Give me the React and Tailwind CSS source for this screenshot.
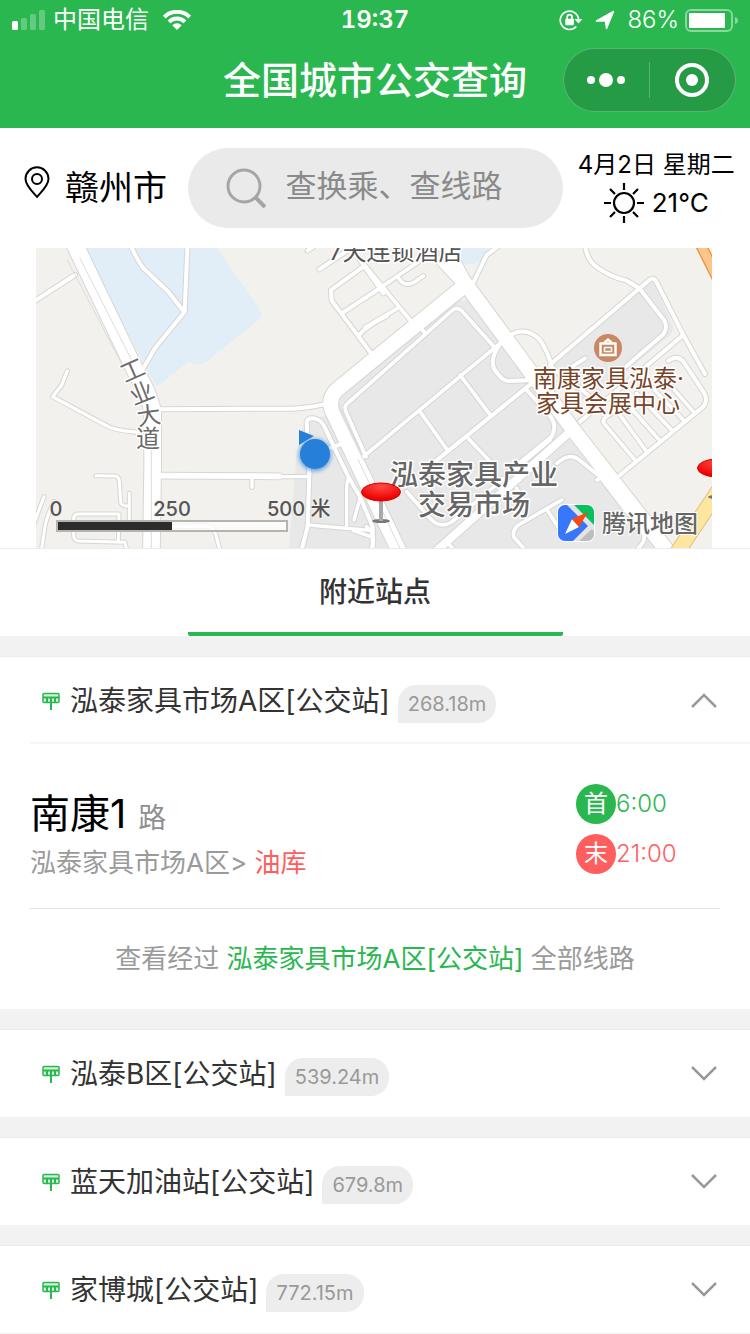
import React, { useState } from "react";

// Road geometry is kept in 3x units, split into a west and an east tile.
const westRoads = [
  { d: "M128 0 L320 400 Q362 470 368 520 L368 680 L364 950", w: 50 },
  { d: "M0 192 L135 105", w: 12 },
  { d: "M300 10 Q315 50 340 85 L415 155 L462 215", w: 12 },
  { d: "M473 0 L464 215 L375 325 L340 385", w: 12 },
  { d: "M112 393 L95 435 L68 470 L235 560 Q260 572 330 577", w: 10 },
  { d: "M390 508 L790 506 Q840 503 895 490", w: 12 },
  { d: "M385 707 L748 709", w: 17 },
  { d: "M740 710 L838 710", w: 10 },
  { d: "M666 715 L666 742", w: 10 },
  { d: "M198 707 L255 708 Q268 710 268 725 L272 785 Q272 798 296 798", w: 9 },
  { d: "M298 760 L298 855 L340 858", w: 9 },
  { d: "M267 822 L145 822 Q132 822 131 835 L131 885 Q131 902 145 903 L285 907 L292 940 M267 822 L265 905", w: 9 },
  { d: "M42 770 L12 850 M72 784 Q50 830 45 860 L33 940", w: 9 },
  { d: "M388 860 L530 858 Q550 860 558 885 L572 940", w: 10 },
  { d: "M838 700 L830 545 Q835 530 860 537 Q880 545 890 575 L955 710 L990 770 L1028 860 L1028 940", w: 12 },
  { d: "M838 700 L833 860 L812 940", w: 12 },
  { d: "M957 712 Q948 730 950 760 L950 865 M835 855 L1030 872 M970 872 L1030 892 M990 775 L972 840", w: 10 },
  { d: "M900 625 L945 607", w: 12 },
  { d: "M1000 80 L903 150 L905 182 L1035 355 M990 60 L1060 160 M935 220 L1060 138 M990 282 Q1010 258 1070 228 M868 88 L970 20 M833 32 L850 20", w: 12 },
];

const eastRoads = [
  { d: "M195 50 L280 142", w: 20 },
  { d: "M225 20 L278 120 L610 570 L905 950", w: 44 },
  { d: "M280 140 L0 368 L-100 450 Q-130 480 -110 520 L95 950", w: 44 },
  { d: "M600 575 L180 950", w: 24 },
  { d: "M-12 650 L-72 515 Q-80 500 -65 488 L248 210 Q262 200 275 212 L370 318 M150 262 L168 282 M-30 658 L390 310", w: 11 },
  { d: "M270 405 L362 527 M150 515 L232 630 M290 590 L370 675", w: 11 },
  { d: "M388 315 Q350 370 385 403 Q400 424 420 423 L490 420 M485 430 L170 685", w: 12 },
  { d: "M420 285 Q470 258 510 300 Q528 325 545 375", w: 12 },
  { d: "M470 450 L542 530 Q562 555 545 590 L410 700", w: 12 },
  { d: "M110 755 L185 840 Q212 866 245 846 L540 600", w: 11 },
  { d: "M560 670 Q600 635 628 660 L690 710 L820 880 Q830 900 805 925 M720 700 L680 720", w: 11 },
  { d: "M575 780 L445 855 Q425 872 432 892 L475 940 M530 808 L570 870 M440 745 L458 775 M235 910 L260 940", w: 11 },
  { d: "M545 370 L835 122 Q850 108 860 127 L940 285 L1005 402", w: 12 },
  { d: "M808 145 L882 240 Q895 262 880 283 L770 378", w: 12 },
  { d: "M645 10 Q648 60 682 82 Q720 110 770 122 L808 145", w: 12 },
  { d: "M750 705 L1000 500 Q1015 480 1002 458 L938 362 Q920 345 895 362", w: 12 },
  { d: "M630 545 L940 285", w: 12 },
  { d: "M795 660 L702 550 Q695 538 712 528 L765 495 M740 512 L830 635 M770 490 L868 600 M800 460 L905 570 M830 425 L940 540 M865 395 L970 515", w: 11 },
  { d: "M540 375 L590 425 M590 390 L645 355 M600 420 L660 470", w: 11 },
  { d: "M308 132 L350 45 L390 15", w: 12 },
  { d: "M-20 70 L120 240 M-20 178 L190 35 M82 108 Q100 143 130 128 L160 108 M82 205 L-15 262", w: 11 },
  { d: "M-10 860 Q20 880 5 925", w: 11 },
];

const stations = [
  {
    name: "泓泰家具市场A区[公交站]",
    distance: "268.18m",
    lines: [{ name: "南康1", from: "泓泰家具市场A区", to: "油库", first: "6:00", last: "21:00" }],
  },
  { name: "泓泰B区[公交站]", distance: "539.24m", lines: [] },
  { name: "蓝天加油站[公交站]", distance: "679.8m", lines: [] },
  { name: "家博城[公交站]", distance: "772.15m", lines: [] },
];

function Roads({ roads, casing }) {
  return roads.map((road, i) => (
    <path
      key={i}
      d={road.d}
      stroke={casing ? "#d6d6d3" : "#ffffff"}
      strokeWidth={casing ? road.w + 6 : road.w}
    />
  ));
}

function Pushpin({ x, y }) {
  return (
    <g transform={`translate(${x} ${y})`}>
      <ellipse cx="0" cy="29" rx="9" ry="2" fill="#777" />
      <rect x="-2" y="6" width="4" height="23" fill="#a9a9a9" />
      <ellipse cx="0" cy="0" rx="19.500" ry="9" fill="url(#pinRed)" stroke="#d80000" />
    </g>
  );
}

function NearbyMap() {
  const west = "translate(-6 -8) scale(0.33333)";
  const east = "translate(334 -8) scale(0.33333)";
  return (
    <svg viewBox="0 0 676 300" className="block w-full bg-[#f2f1ed]" role="img" aria-label="地图">
      <defs>
        <radialGradient id="pinRed" cx="0.5" cy="0.2" r="0.7">
          <stop offset="0" stopColor="#ff4a45" />
          <stop offset="1" stopColor="#ee0000" />
        </radialGradient>
        <filter id="glow" x="-50%" y="-50%" width="200%" height="200%">
          <feGaussianBlur stdDeviation="2" />
        </filter>
      </defs>

      <g transform={west}>
        <path d="M145 0 L545 0 L690 210 Q698 225 688 238 L528 366 Q512 378 495 374 L475 366 L380 440 Z" fill="#e1eef8" />
        <path d="M775 950 L800 640 L820 555 L900 520 L1130 950 Z" fill="#e8e8e8" />
      </g>
      <g transform={east}>
        <ellipse cx="300" cy="24" rx="55" ry="48" fill="#e1eef8" />
        <path d="M-100 480 L255 185 L290 180 L420 320 L610 570 L900 950 L100 950 Z" fill="#e8e8e8" />
        <path d="M545 370 L810 145 L850 120 L910 262 Q910 275 895 290 L700 450 L640 480 Z" fill="#e8e8e8" />
      </g>

      <g fill="none" strokeLinecap="round" strokeLinejoin="round">
        <g transform={west}><Roads roads={westRoads} casing /></g>
        <g transform={east}><Roads roads={eastRoads} casing /></g>
        <g transform={west}><Roads roads={westRoads} /></g>
        <g transform={east}><Roads roads={eastRoads} /></g>
        <g transform={west} stroke="#dcdcda" strokeWidth="3">
          <path d="M112 60 L285 390 M150 55 L310 370 M364 630 L364 950" />
          <path d="M925 495 L930 515 L1000 660 M985 660 L1110 925" />
        </g>
        <g transform={east}>
          <path d="M985 0 L1060 150" stroke="#e9953c" strokeWidth="34" />
          <path d="M985 0 L1060 150" stroke="#fcc68b" strokeWidth="26" />
          <path d="M1060 730 L910 955" stroke="#e5bf79" strokeWidth="48" />
          <path d="M1060 730 L910 955" stroke="#ffe6a0" strokeWidth="42" />
        </g>
      </g>

      {/* exhibition centre */}
      <circle cx="572" cy="100" r="14" fill="#cb8664" />
      <g fill="none" stroke="#ffffff" strokeWidth="2.400">
        <path d="M564.500 95.500 H579.500 V107 H564.500 Z" />
        <path d="M568.500 99.500 H575.500 V103.500 H568.500 Z" strokeWidth="1.500" />
        <path d="M568 95 L572 91.500 L576 95" />
      </g>

      {/* current position */}
      <circle cx="279" cy="207" r="16" fill="#2680d9" opacity="0.7" filter="url(#glow)" />
      <path d="M263 182 L278 188 L263 197 Z" fill="#2680d9" />
      <circle cx="279" cy="206" r="15" fill="#2680d9" />

      <g stroke="#ffffff" strokeWidth="3" strokeLinejoin="round" className="[paint-order:stroke]">
        <g fill="#555555" fontSize="24">
          <text x="293" y="12">7天连锁酒店</text>
        </g>
        <g fill="#6b6b6b" fontSize="24" textAnchor="middle">
          <text transform="translate(100 130) rotate(-24)">工</text>
          <text transform="translate(109 153) rotate(-22)">业</text>
          <text transform="translate(114 176) rotate(-8)">大</text>
          <text transform="translate(112 199)">道</text>
        </g>
        <g fill="#774428" fontSize="24">
          <text x="497" y="139">南康家具泓泰·</text>
          <text x="500" y="164">家具会展中心</text>
        </g>
        <g fill="#666666" fontSize="28" fontWeight="500" textAnchor="middle">
          <text x="438" y="237">泓泰家具产业</text>
          <text x="438" y="267">交易市场</text>
        </g>
      </g>

      <Pushpin x={345} y={244} />
      <Pushpin x={681} y={220} />

      {/* scale bar */}
      <rect x="21" y="273" width="230" height="10" fill="#ffffff" fillOpacity="0.7" stroke="#b5b4b1" strokeWidth="2" />
      <rect x="22" y="274" width="114" height="8" fill="#2c2c2c" />
      <g fill="#555555" fontSize="20" fontWeight="500" stroke="#f2f1ed" strokeWidth="2" className="[paint-order:stroke]">
        <text x="20" y="268" textAnchor="middle">0</text>
        <text x="136" y="268" textAnchor="middle">250</text>
        <text x="231" y="268">500 米</text>
      </g>

      {/* map provider */}
      <clipPath id="logoClip"><rect x="522" y="257" width="36" height="36" rx="7" /></clipPath>
      <rect x="521" y="256" width="38" height="38" rx="8" fill="#ffffff" />
      <g clipPath="url(#logoClip)">
        <rect x="522" y="257" width="36" height="36" fill="#e4e4e4" />
        <path d="M522 257 H531 L552 278 L537 293 H522 Z" fill="#3777fb" />
        <path d="M538 257 H558 V277 Z" fill="#07c160" />
        <path d="M543 293 L556 281 L558 283 V293 Z" fill="#bdbdbd" />
        <path d="M529 286 L536 271 L543 279 Z" fill="#ffffff" />
        <path d="M536 271 L552 264 L543 279 Z" fill="#fc4b12" />
      </g>
      <text x="566" y="284" fontSize="24" fontWeight="500" fill="#666666" stroke="#ffffff" strokeWidth="2" className="[paint-order:stroke]">
        腾讯地图
      </text>
    </svg>
  );
}

function StatusBar() {
  return (
    <div className="grid h-10 grid-cols-[1fr_auto_1fr] items-center text-2xl">
      <div className="flex items-center gap-2 pl-3">
        <svg viewBox="0 0 33 20" className="h-5 w-[33px]" fill="#ffffff">
          <rect x="0" y="11" width="6" height="9" rx="1.500" />
          <g opacity="0.27">
            <rect x="9" y="8" width="6" height="12" rx="1.500" />
            <rect x="18" y="4" width="6" height="16" rx="1.500" />
            <rect x="27" y="0" width="6" height="20" rx="1.500" />
          </g>
        </svg>
        <span>中国电信</span>
        <svg viewBox="0 0 28 20" className="ml-1.5 h-5 w-7" fill="none" stroke="#ffffff" strokeWidth="4">
          <path d="M1.300 7 A18 18 0 0 1 26.700 7" />
          <path d="M6 11.900 A11.300 11.300 0 0 1 22 11.900" />
          <path d="M14 20 L9.300 15.300 A6.600 6.600 0 0 1 18.700 15.300 Z" fill="#ffffff" stroke="none" />
        </svg>
      </div>
      <span className="font-semibold tabular-nums">19:37</span>
      <div className="flex items-center justify-end pr-3">
        <svg viewBox="0 0 24 22" className="h-[22px] w-6" fill="none" stroke="#ffffff" strokeWidth="1.700">
          <path d="M17.300 17.500 A9.200 9.200 0 1 1 19.600 10" />
          <path d="M15.500 10 H23.500 L19.500 14.500 Z" fill="#ffffff" stroke="none" />
          <rect x="6.300" y="9.800" width="8.600" height="6.400" rx="0.800" fill="#ffffff" stroke="none" />
          <path d="M8.200 10 V8 A2.400 2.400 0 0 1 13 8 V10" />
        </svg>
        <svg viewBox="0 0 20 20" className="ml-3 h-5 w-5" fill="#ffffff">
          <path d="M1.500 11 L18.500 1.500 L11.500 18.500 L10.500 11 Z" stroke="#ffffff" strokeWidth="1.500" strokeLinejoin="round" />
        </svg>
        <span className="ml-3 font-light">86%</span>
        <svg viewBox="0 0 53 23" className="ml-1.5 h-[23px] w-[53px]">
          <rect x="1" y="1" width="46" height="21" rx="5" fill="none" stroke="#ffffff" strokeOpacity="0.45" strokeWidth="2" />
          <rect x="4" y="4" width="36" height="15" rx="1" fill="#ffffff" />
          <path d="M50 8 Q53 9 53 11.500 Q53 14 50 15 Z" fill="#ffffff" fillOpacity="0.45" />
        </svg>
      </div>
    </div>
  );
}

function Header() {
  return (
    <header className="bg-[#2bb750] pb-2 text-white">
      <StatusBar />
      <div className="grid h-20 grid-cols-[1fr_auto_1fr] items-center">
        <h1 className="col-start-2 text-[38px] leading-none font-medium">全国城市公交查询</h1>
        <div className="mr-3.5 grid h-16 w-[173px] grid-cols-2 items-center justify-self-end rounded-full border border-white/25 bg-[#259b46]">
          <button className="flex h-9 items-center justify-center gap-1 border-r border-white/25" aria-label="更多">
            <span className="size-2 rounded-full bg-white" />
            <span className="size-3.5 rounded-full bg-white" />
            <span className="size-2 rounded-full bg-white" />
          </button>
          <button className="flex items-center justify-center" aria-label="关闭">
            <svg viewBox="0 0 34 34" className="size-[34px]">
              <circle cx="17" cy="17" r="15" fill="none" stroke="#ffffff" strokeWidth="4" />
              <circle cx="17" cy="17" r="6" fill="#ffffff" />
            </svg>
          </button>
        </div>
      </div>
    </header>
  );
}

function SearchBar() {
  return (
    <div className="flex h-[120px] items-center">
      <button className="flex w-1/4 items-center gap-[15px] pl-6 text-[34px] leading-none">
        <svg viewBox="0 0 26 32" className="mb-3 h-8 w-[26px] shrink-0" fill="none" stroke="#000000" strokeWidth="2">
          <path d="M13 31 C10 27 1.500 20 1.500 12.800 A11.500 11.500 0 0 1 24.500 12.800 C24.500 20 16 27 13 31 Z" strokeLinejoin="round" />
          <circle cx="13" cy="13" r="5" />
        </svg>
        <span className="whitespace-nowrap">赣州市</span>
      </button>
      <label className="flex h-20 w-1/2 items-center gap-5 rounded-full bg-[#eaeaea] pl-[38px]">
        <svg viewBox="0 0 40 40" className="size-10 shrink-0" fill="none" stroke="#a5a5a5" strokeWidth="3">
          <circle cx="18" cy="18" r="16" />
          <path d="M29 29 L39 39" strokeWidth="4" />
        </svg>
        <input
          type="text"
          aria-label="查换乘、查线路"
          placeholder="查换乘、查线路"
          className="mb-1 w-full min-w-0 bg-transparent text-[31px] outline-none placeholder:text-[#8a8a8a]"
        />
      </label>
      <div className="mb-1.5 flex w-1/4 flex-col items-center text-2xl">
        <span className="leading-9 whitespace-nowrap">4月2日 星期二</span>
        <div className="flex items-center gap-2 text-[26px] leading-10">
          <svg viewBox="0 0 40 40" className="size-10" fill="none" stroke="#000000" strokeWidth="2.200">
            <circle cx="20" cy="20" r="10" />
            <path d="M20 0 V7 M20 33 V40 M0 20 H7 M33 20 H40 M6 6 L11 11 M29 29 L34 34 M34 6 L29 11 M11 29 L6 34" />
          </svg>
          <span>21℃</span>
        </div>
      </div>
    </div>
  );
}

function StopIcon() {
  return (
    <svg viewBox="0 0 18 18" className="size-[18px] shrink-0" fill="none" stroke="#2bb750">
      <rect x="1" y="1.500" width="16" height="9" rx="1" fill="#d3f1dc" strokeWidth="1.500" />
      <path d="M1 5.500 H17" strokeWidth="2" />
      <path d="M5 6 V10 M9 6 V10 M13 6 V10" strokeWidth="2" />
      <path d="M9 10 V18" strokeWidth="2" />
    </svg>
  );
}

function LineRow({ line }) {
  return (
    <div className="mx-[30px] flex justify-between border-b border-[#e3e3e3] pt-10 pb-[30px]">
      <div>
        <div className="flex items-baseline gap-3 text-[40px] leading-[60px]">
          {line.name}
          <span className="text-[28px] text-[#8f8f8f]">路</span>
        </div>
        <div className="text-[26px] leading-[30px] text-[#9a9a9a]">
          {line.from}&gt; <span className="text-[#ff5e5e]">{line.to}</span>
        </div>
      </div>
      <div className="flex w-36 flex-col gap-2.5 text-2xl font-light">
        <div className="flex items-center text-[#2bb750]">
          <span className="flex size-10 items-center justify-center rounded-full bg-[#2bb750] font-normal text-white">首</span>
          {line.first}
        </div>
        <div className="flex items-center text-[#ff5e5e]">
          <span className="flex size-10 items-center justify-center rounded-full bg-[#ff5e5e] font-normal text-white">末</span>
          {line.last}
        </div>
      </div>
    </div>
  );
}

function Station({ station, open, onToggle }) {
  return (
    <li className="border-t border-[#ebebeb] bg-white">
      <button onClick={onToggle} aria-expanded={open} className="flex h-[87px] w-full items-center pr-8 pl-[42px] text-left">
        <StopIcon />
        <span className="ml-2.5 text-[28px] leading-10 text-[#333333]">{station.name}</span>
        <span className="mt-1.5 ml-2 rounded-[18px] rounded-bl-none bg-[#ededed] px-2.5 text-xl leading-[38px] text-[#999999]">
          {station.distance}
        </span>
        <svg viewBox="0 0 28 16" className="ml-auto h-4 w-7" fill="none" stroke="#999999" strokeWidth="2.500">
          <path d={open ? "M2 14 L14 2 L26 14" : "M2 1 L14 13 L26 1"} />
        </svg>
      </button>
      {open && (
        <div>
          <div className="-mt-0.5 ml-[30px] h-0.5 bg-[#f5f5f5]" />
          {station.lines.map((line) => (
            <LineRow key={line.name} line={line} />
          ))}
          <a href="#lines" className="block py-[30px] text-center text-[26px] leading-10 text-[#9a9a9a]">
            查看经过 <span className="text-[#2bb750]">{station.name}</span> 全部线路
          </a>
        </div>
      )}
    </li>
  );
}

export default function App() {
  const [openIndex, setOpenIndex] = useState(0);

  return (
    <div className="min-h-screen bg-[#f2f2f2] font-[Inter,'Noto_Sans_CJK_SC',sans-serif] text-black">
      <Header />
      <div className="bg-white">
        <SearchBar />
        <div className="mr-[38px] ml-9">
          <NearbyMap />
        </div>
        <nav className="flex justify-center border-t border-[#ebebeb]">
          <button className="w-1/2 rounded-b-xs border-b-4 border-[#2bb750] pt-[3px] text-[28px] leading-[80px] font-medium text-[#333333]">
            附近站点
          </button>
        </nav>
      </div>
      <ul className="flex flex-col gap-5 pt-5">
        {stations.map((station, i) => (
          <Station
            key={station.name}
            station={station}
            open={openIndex === i}
            onToggle={() => setOpenIndex(openIndex === i ? -1 : i)}
          />
        ))}
      </ul>
    </div>
  );
}
